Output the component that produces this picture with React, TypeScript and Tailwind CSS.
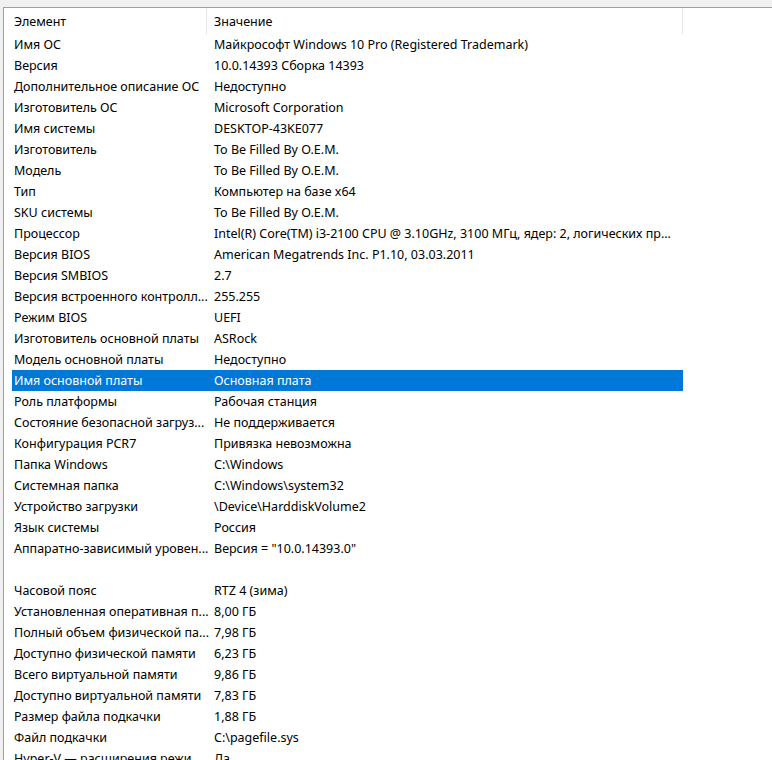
const rows: [string, string][] = [
  ["Имя ОС", "Майкрософт Windows 10 Pro (Registered Trademark)"],
  ["Версия", "10.0.14393 Сборка 14393"],
  ["Дополнительное описание ОС", "Недоступно"],
  ["Изготовитель ОС", "Microsoft Corporation"],
  ["Имя системы", "DESKTOP-43KE077"],
  ["Изготовитель", "To Be Filled By O.E.M."],
  ["Модель", "To Be Filled By O.E.M."],
  ["Тип", "Компьютер на базе x64"],
  ["SKU системы", "To Be Filled By O.E.M."],
  ["Процессор", "Intel(R) Core(TM) i3-2100 CPU @ 3.10GHz, 3100 МГц, ядер: 2, логических пр..."],
  ["Версия BIOS", "American Megatrends Inc. P1.10, 03.03.2011"],
  ["Версия SMBIOS", "2.7"],
  ["Версия встроенного контролл...", "255.255"],
  ["Режим BIOS", "UEFI"],
  ["Изготовитель основной платы", "ASRock"],
  ["Модель основной платы", "Недоступно"],
  ["Имя основной платы", "Основная плата"],
  ["Роль платформы", "Рабочая станция"],
  ["Состояние безопасной загруз...", "Не поддерживается"],
  ["Конфигурация PCR7", "Привязка невозможна"],
  ["Папка Windows", "C:\\Windows"],
  ["Системная папка", "C:\\Windows\\system32"],
  ["Устройство загрузки", "\\Device\\HarddiskVolume2"],
  ["Язык системы", "Россия"],
  ["Аппаратно-зависимый уровен...", "Версия = \"10.0.14393.0\""],
  ["", ""],
  ["Часовой пояс", "RTZ 4 (зима)"],
  ["Установленная оперативная п...", "8,00 ГБ"],
  ["Полный объем физической па...", "7,98 ГБ"],
  ["Доступно физической памяти", "6,23 ГБ"],
  ["Всего виртуальной памяти", "9,86 ГБ"],
  ["Доступно виртуальной памяти", "7,83 ГБ"],
  ["Размер файла подкачки", "1,88 ГБ"],
  ["Файл подкачки", "C:\\pagefile.sys"],
  ["Hyper-V — расширения режи...", "Да"],
];

const SELECTED = 16;

export default function App() {
  return (
    <div
      className="flex h-screen w-full flex-col overflow-hidden bg-[#f0f0f0] text-[12.5px] text-black"
      style={{ fontFamily: '"Noto Sans", "DejaVu Sans", sans-serif' }}
    >
      <div className="h-[7px] shrink-0" />
      <div className="flex min-h-0 flex-1 pl-[3px]">
        <div className="flex min-w-0 flex-1 flex-col border-l border-t border-[#a0a0a0] bg-white pl-[8px]">
          {/* header */}
          <div className="flex h-[26px] shrink-0 items-center">
            <div className="flex h-full w-[195px] shrink-0 items-center border-r border-[#e5e5e5] pl-[2px] pt-[2px]">
              Элемент
            </div>
            <div className="flex h-full w-[476px] shrink-0 items-center border-r border-[#e5e5e5] pl-[7px] pt-[2px]">
              Значение
            </div>
          </div>
          {rows.map(([name, value], i) => (
            <div
              key={i}
              className={
                i === SELECTED
                  ? "flex h-[21px] w-[671px] shrink-0 items-center bg-[#0078d7] pt-[2px] text-white"
                  : "flex h-[21px] w-[671px] shrink-0 items-center pt-[2px]"
              }
            >
              <div className="w-[195px] shrink-0 whitespace-nowrap pl-[2px]">{name}</div>
              <div className="w-[476px] shrink-0 overflow-hidden whitespace-nowrap pl-[7px]">{value}</div>
            </div>
          ))}
        </div>
      </div>
    </div>
  );
}
